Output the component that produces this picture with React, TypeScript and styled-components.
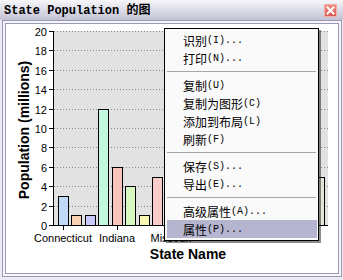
import React from 'react';
import styled, { createGlobalStyle } from 'styled-components';

const Global = createGlobalStyle`
  html, body { margin: 0; padding: 0; background: #ffffff; }
  body { font-family: "Liberation Sans", Arial, sans-serif; }
`;

const Window = styled.div`
  position: relative;
  width: 343px;
  height: 280px;
  box-sizing: border-box;
  background: #ecebf3;
  display: flex;
  flex-direction: column;
  padding: 0 1px 3px 2px;
  overflow: hidden;
`;

const TitleBar = styled.div`
  height: 20px;
  flex: none;
  margin: 0 -1px 0 -2px;
  background: linear-gradient(#f6f6fa, #c2c2d4);
  display: flex;
  align-items: center;
  justify-content: space-between;
  padding: 0 6px 0 4px;
`;

const Title = styled.div`
  font: bold 12px "Liberation Mono", "Noto Sans CJK SC", monospace;
  color: #000;
  white-space: pre;
  line-height: 14px;
  padding-top: 2px;
`;

const CloseButton = styled.div`
  width: 13px;
  height: 13px;
  box-sizing: border-box;
  border: 1px solid #f2b0a8;
  background: linear-gradient(#ee8a80, #d85a50);
  display: flex;
  align-items: center;
  justify-content: center;
`;

const Frame = styled.div`
  flex: 1;
  display: flex;
  border: 1px solid #9a9ab6;
  padding: 2px;
  background: #f6f6fa;
`;

const Client = styled.div`
  flex: 1;
  border: 1px solid #9a9ab6;
  background: #ffffff;
  display: flex;
`;

const ChartSvg = styled.svg`
  display: block;
  font-family: "Liberation Sans", Arial, sans-serif;
`;

const Menu = styled.div`
  position: absolute;
  left: 164px;
  top: 28px;
  width: 155px;
  box-sizing: border-box;
  border: 1px solid #000;
  background: #fafafa;
  padding: 2px 1px 2px 2px;
  box-shadow: 2px 2px 0 rgba(0, 0, 0, 0.45);
  display: flex;
  flex-direction: column;
`;

const Item = styled.div<{ $active?: boolean }>`
  height: 18px;
  display: flex;
  align-items: center;
  padding-left: 16px;
  background: ${(p) => (p.$active ? '#b6b5cf' : 'transparent')};
  font: 12px "Noto Sans CJK SC", sans-serif;
  color: #000;
  white-space: pre;
`;

const Key = styled.span`
  font: 10px "Liberation Mono", monospace;
  letter-spacing: 0;
`;

const Separator = styled.div`
  height: 1px;
  margin: 4px 1px 4px 0;
  background: #a6a6a6;
`;

const bars = [3, 1, 1, 12, 6, 4, 1, 5, 9, 4, 2, 6, 5, 3, 8, 4, 5, 2, 7, 5];
const colors = [
  '#bfdaf6', '#f9d1b3', '#cacafa', '#c2f8e0', '#f9c4bc', '#d9f8c2', '#f8f8b4', '#f9cccc',
  '#d8e4f0', '#d8e4f0', '#d8e4f0', '#d8e4f0', '#d8e4f0', '#d8e4f0', '#d8e4f0', '#d8e4f0',
  '#d8e4f0', '#d8e4f0', '#d8e4f0', '#e2e8d6',
];

const X0 = 58;
const SLOT = 13.45;
const yv = (v: number) => 225 - v * 9.7;

function Chart() {
  const grid = [] as React.ReactNode[];
  for (let v = 2; v <= 20; v += 2) {
    grid.push(
      <line key={'g' + v} x1={54} x2={328} y1={Math.round(yv(v)) + 0.5} y2={Math.round(yv(v)) + 0.5}
        stroke="#8a8a8a" strokeDasharray="1 2" />
    );
  }
  const ticks = [] as React.ReactNode[];
  const ylabels = [] as React.ReactNode[];
  for (let v = 0; v <= 20; v += 2) {
    const y = Math.round(yv(v)) + 0.5;
    ticks.push(<line key={'t' + v} x1={49} x2={54} y1={y} y2={y} stroke="#000" />);
    ylabels.push(
      <text key={'l' + v} x={47} y={y + 4} fontSize={11} textAnchor="end" fill="#000">{v}</text>
    );
  }
  const labels: [number, string][] = [[0, 'Connecticut'], [4, 'Indiana'], [8, 'Missouri']];
  return (
    <ChartSvg width={332} height={249} viewBox="6 24 332 249">
      <rect x={54} y={31} width={274} height={194} fill="#e2e2e2" />
      {grid}
      {bars.map((v, i) => {
        const x = Math.round(X0 + SLOT * i) + 0.5;
        const top = Math.round(yv(v)) + 0.5;
        return (
          <rect key={i} x={x} y={top} width={10} height={225.5 - top}
            fill={colors[i]} stroke="#000" />
        );
      })}
      <line x1={53.5} x2={53.5} y1={31} y2={226} stroke="#000" />
      <line x1={53} x2={328} y1={225.5} y2={225.5} stroke="#000" />
      {ticks}
      {ylabels}
      {labels.map(([i, t]) => {
        const cx = Math.round(X0 + SLOT * i) + 5;
        return (
          <g key={t}>
            <line x1={cx + 0.5} x2={cx + 0.5} y1={226} y2={230} stroke="#000" />
            <text x={cx} y={242} fontSize={11} textAnchor="middle" fill="#000">{t}</text>
          </g>
        );
      })}
      <text x={0} y={0} fontSize={14} fontWeight="bold" textAnchor="middle"
        transform="translate(29 130) rotate(-90)" fill="#000">Population (millions)</text>
      <text x={188} y={259} fontSize={14} fontWeight="bold" textAnchor="middle" fill="#000">State Name</text>
    </ChartSvg>
  );
}

export default function App() {
  return (
    <>
      <Global />
      <Window>
        <TitleBar>
          <Title>State Population 的图</Title>
          <CloseButton>
            <svg width="9" height="9" viewBox="0 0 9 9">
              <path d="M1.5 1.5 L7.5 7.5 M7.5 1.5 L1.5 7.5" stroke="#fff" strokeWidth="2" strokeLinecap="square" />
            </svg>
          </CloseButton>
        </TitleBar>
        <Frame>
          <Client>
            <Chart />
          </Client>
        </Frame>
        <Menu>
          <Item>识别<Key>(I)...</Key></Item>
          <Item>打印<Key>(N)...</Key></Item>
          <Separator />
          <Item>复制<Key>(U)</Key></Item>
          <Item>复制为图形<Key>(C)</Key></Item>
          <Item>添加到布局<Key>(L)</Key></Item>
          <Item>刷新<Key>(F)</Key></Item>
          <Separator />
          <Item>保存<Key>(S)...</Key></Item>
          <Item>导出<Key>(E)...</Key></Item>
          <Separator />
          <Item>高级属性<Key>(A)...</Key></Item>
          <Item $active>属性<Key>(P)...</Key></Item>
        </Menu>
      </Window>
    </>
  );
}
